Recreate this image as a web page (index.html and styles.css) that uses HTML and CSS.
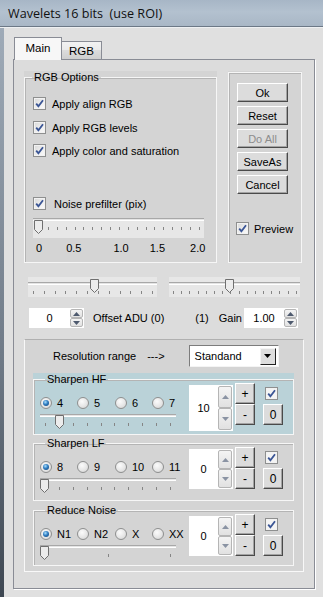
FILE: index.html
```html
<!DOCTYPE html>
<html>
<head>
<meta charset="utf-8">
<title>Wavelets 16 bits (use ROI)</title>
<link rel="stylesheet" href="styles.css">
</head>
<body>
<div class="window">
  <div class="titlebar"><span class="title">Wavelets 16 bits&nbsp; (use ROI)</span></div>
  <div class="client">
    <div class="tabs">
      <div class="tab active">Main</div>
      <div class="tab">RGB</div>
    </div>
    <div class="tabpanel">
      <div class="toprow">
        <div class="group grp-rgb">
          <fieldset class="gframe">
            <legend>RGB Options</legend>
            <div class="cb r1"><span class="check"><svg viewBox="0 0 11 11"><path d="M2.2 5.6l2.2 2.6 4.6-6"/></svg></span>Apply align RGB</div>
            <div class="cb r2"><span class="check"><svg viewBox="0 0 11 11"><path d="M2.2 5.6l2.2 2.6 4.6-6"/></svg></span>Apply RGB levels</div>
            <div class="cb r3"><span class="check"><svg viewBox="0 0 11 11"><path d="M2.2 5.6l2.2 2.6 4.6-6"/></svg></span>Apply color and saturation</div>
            <div class="cb r4"><span class="check"><svg viewBox="0 0 11 11"><path d="M2.2 5.6l2.2 2.6 4.6-6"/></svg></span>Noise prefilter (pix)</div>
            <div class="trackbar tb-pre">
              <div class="channel"></div>
              <svg class="thumb" viewBox="0 0 9 14"><path d="M0.5 0.5H8.5V9.5L4.5 13.5L0.5 9.5Z"/></svg>
              <div class="ticks"><i></i><i></i><i></i><i></i><i></i><i></i><i></i><i></i><i></i><i></i><i></i><i></i><i></i><i></i><i></i><i></i><i></i><i></i><i></i></div>
            </div>
            <div class="scale"><span>0</span><span>0.5</span><span>1.0</span><span>1.5</span><span>2.0</span></div>
          </fieldset>
        </div>
        <div class="group grp-btns">
          <div class="gframe btns">
            <button class="btn">Ok</button>
            <button class="btn">Reset</button>
            <button class="btn" disabled>Do All</button>
            <button class="btn">SaveAs</button>
            <button class="btn">Cancel</button>
            <div class="cb preview"><span class="check"><svg viewBox="0 0 11 11"><path d="M2.2 5.6l2.2 2.6 4.6-6"/></svg></span>Preview</div>
          </div>
        </div>
      </div>

      <div class="sliders">
        <div class="trackbar tb-offset">
          <div class="channel"></div>
          <svg class="thumb" viewBox="0 0 9 14"><path d="M0.5 0.5H8.5V9.5L4.5 13.5L0.5 9.5Z"/></svg>
          <div class="ticks"><i></i><i></i><i></i><i></i><i></i><i></i><i></i><i></i><i></i><i></i><i></i><i></i></div>
        </div>
        <div class="trackbar tb-gain">
          <div class="channel"></div>
          <svg class="thumb" viewBox="0 0 9 14"><path d="M0.5 0.5H8.5V9.5L4.5 13.5L0.5 9.5Z"/></svg>
          <div class="ticks"><i></i><i></i><i></i><i></i><i></i><i></i><i></i><i></i><i></i><i></i><i></i><i></i><i></i><i></i><i></i><i></i></div>
        </div>
      </div>

      <div class="spinrow">
        <div class="edit e-offset">0</div>
        <div class="updown"><span class="ud up"><svg viewBox="0 0 7 4"><path d="M0 4L3.5 0L7 4Z"/></svg></span><span class="ud down"><svg viewBox="0 0 7 4"><path d="M0 0L3.5 4L7 0Z"/></svg></span></div>
        <span class="lbl-offset">Offset ADU (0)</span>
        <span class="lbl-one">(1)</span>
        <span class="lbl-gain">Gain</span>
        <div class="edit e-gain">1.00</div>
        <div class="updown"><span class="ud up"><svg viewBox="0 0 7 4"><path d="M0 4L3.5 0L7 4Z"/></svg></span><span class="ud down"><svg viewBox="0 0 7 4"><path d="M0 0L3.5 4L7 0Z"/></svg></span></div>
      </div>

      <div class="lower">
        <div class="resrow">
          <span class="lbl-res">Resolution range</span>
          <span class="lbl-arrow">---&gt;</span>
          <div class="combo"><span class="combo-text">Standand</span><span class="combo-btn"><svg viewBox="0 0 7 4"><path d="M0 0H7L3.5 4Z"/></svg></span></div>
        </div>

        <div class="group wgroup hf">
          <fieldset class="gframe">
            <legend>Sharpen HF</legend>
            <div class="gbody">
              <div class="gleft">
                <div class="radios">
                  <div class="ri"><span class="radio on"></span>4</div>
                  <div class="ri"><span class="radio"></span>5</div>
                  <div class="ri"><span class="radio"></span>6</div>
                  <div class="ri"><span class="radio"></span>7</div>
                </div>
                <div class="trackbar tb-small tb-hf">
                  <div class="channel"></div>
                  <svg class="thumb" viewBox="0 0 9 14"><path d="M0.5 0.5H8.5V9.5L4.5 13.5L0.5 9.5Z"/></svg>
                  <div class="ticks"><i></i><i></i><i></i><i></i><i></i><i></i><i></i><i></i><i></i><i></i></div>
                </div>
              </div>
              <div class="spinbig tall">
                <div class="edit e-big">10</div>
                <div class="updown big"><span class="ud up"><svg viewBox="0 0 7 4"><path d="M0 4L3.5 0L7 4Z"/></svg></span><span class="ud down"><svg viewBox="0 0 7 4"><path d="M0 0L3.5 4L7 0Z"/></svg></span></div>
              </div>
              <div class="pm"><button class="btn sq">+</button><button class="btn sq">-</button></div>
              <div class="rc"><span class="check white"><svg viewBox="0 0 11 11"><path d="M2.2 5.6l2.2 2.6 4.6-6"/></svg></span><button class="btn sq zero">0</button></div>
            </div>
          </fieldset>
        </div>

        <div class="group wgroup lf">
          <fieldset class="gframe">
            <legend>Sharpen LF</legend>
            <div class="gbody">
              <div class="gleft">
                <div class="radios">
                  <div class="ri"><span class="radio on"></span>8</div>
                  <div class="ri"><span class="radio"></span>9</div>
                  <div class="ri"><span class="radio"></span>10</div>
                  <div class="ri"><span class="radio"></span>11</div>
                </div>
                <div class="trackbar tb-small tb-lf">
                  <div class="channel"></div>
                  <svg class="thumb" viewBox="0 0 9 14"><path d="M0.5 0.5H8.5V9.5L4.5 13.5L0.5 9.5Z"/></svg>
                  <div class="ticks"><i></i><i></i><i></i><i></i><i></i><i></i><i></i><i></i><i></i><i></i></div>
                </div>
              </div>
              <div class="spinbig">
                <div class="edit e-big">0</div>
                <div class="updown big"><span class="ud up"><svg viewBox="0 0 7 4"><path d="M0 4L3.5 0L7 4Z"/></svg></span><span class="ud down"><svg viewBox="0 0 7 4"><path d="M0 0L3.5 4L7 0Z"/></svg></span></div>
              </div>
              <div class="pm"><button class="btn sq">+</button><button class="btn sq">-</button></div>
              <div class="rc"><span class="check white"><svg viewBox="0 0 11 11"><path d="M2.2 5.6l2.2 2.6 4.6-6"/></svg></span><button class="btn sq zero">0</button></div>
            </div>
          </fieldset>
        </div>

        <div class="group wgroup rn">
          <fieldset class="gframe">
            <legend>Reduce Noise</legend>
            <div class="gbody">
              <div class="gleft">
                <div class="radios">
                  <div class="ri"><span class="radio on"></span>N1</div>
                  <div class="ri"><span class="radio"></span>N2</div>
                  <div class="ri"><span class="radio"></span>X</div>
                  <div class="ri"><span class="radio"></span>XX</div>
                </div>
                <div class="trackbar tb-small tb-rn">
                  <div class="channel"></div>
                  <svg class="thumb" viewBox="0 0 9 14"><path d="M0.5 0.5H8.5V9.5L4.5 13.5L0.5 9.5Z"/></svg>
                  <div class="ticks"><i></i><i></i><i></i></div>
                </div>
              </div>
              <div class="spinbig">
                <div class="edit e-big">0</div>
                <div class="updown big"><span class="ud up"><svg viewBox="0 0 7 4"><path d="M0 4L3.5 0L7 4Z"/></svg></span><span class="ud down"><svg viewBox="0 0 7 4"><path d="M0 0L3.5 4L7 0Z"/></svg></span></div>
              </div>
              <div class="pm"><button class="btn sq">+</button><button class="btn sq">-</button></div>
              <div class="rc"><span class="check white"><svg viewBox="0 0 11 11"><path d="M2.2 5.6l2.2 2.6 4.6-6"/></svg></span><button class="btn sq zero">0</button></div>
            </div>
          </fieldset>
        </div>
      </div>
    </div>
  </div>
</div>
</body>
</html>
```

FILE: styles.css
```css
* { box-sizing: border-box; }
html, body { margin: 0; padding: 0; }
body {
  width: 323px;
  height: 597px;
  overflow: hidden;
  font: 11px "Liberation Sans", Arial, sans-serif;
  color: #000;
  background: #e0e0e0;
}

.window {
  width: 323px;
  height: 597px;
  display: flex;
  flex-direction: column;
  background:
    linear-gradient(180deg, #a3afbc 0%, #6f7a87 60%, #3e4752 100%) left top / 4px 100% no-repeat,
    #e0e0e0;
}

.titlebar {
  flex: none;
  height: 27px;
  padding-left: 8px;
  display: flex;
  align-items: center;
  background: linear-gradient(180deg, #a7b6c6 0%, #b3c1cf 45%, #a9b7c6 100%);
  border-bottom: 1px solid #6c7886;
  box-shadow: 0 1px 0 #eef0f2;
}
.title {
  font: 12.6px "Open Sans", "Noto Sans", sans-serif;
  color: #111;
  white-space: pre;
}

.client {
  flex: 1;
  padding: 10px 0 0 13px;
}

/* tabs */
.tabs {
  display: flex;
  align-items: flex-end;
  height: 22px;
  margin-left: 1px;
  position: relative;
  z-index: 1;
}
.tab {
  height: 18px;
  border: 1px solid #898c95;
  border-bottom: none;
  background: linear-gradient(180deg, #f2f2f2 0%, #ebebeb 45%, #dcdcdc 50%, #cfcfcf 100%);
  display: flex;
  align-items: center;
  justify-content: center;
  width: 41px;
  margin-left: -1px;
  padding-top: 1px;
  font-size: 11.5px;
}
.tab.active {
  width: 48px;
  height: 23px;
  margin-left: 0;
  margin-bottom: -1px;
  background: #f7f7f7;
  position: relative;
  z-index: 2;
  padding-top: 0;
  padding-bottom: 2px;
}

.tabpanel {
  width: 302px;
  height: 530px;
  border: 1px solid #898c95;
  background: #dcdcdc;
  box-shadow: 1px 1px 0 #ffffff;
  padding: 11px 0 0 10px;
}

/* group boxes */
.toprow {
  display: flex;
  gap: 11px;
  height: 192px;
}
.group { background: #d4d4d4; }
.grp-rgb { width: 193px; }
.grp-btns { width: 74px; padding-top: 1px; }

fieldset.gframe {
  margin: 0;
  padding: 0 0 0 8px;
  min-width: 0;
  height: 100%;
  border: 1px solid #f6f6f6;
  box-shadow: inset 1px 1px 0 #b4b4b4;
}
.gframe legend {
  padding: 0 2px;
  margin-left: -1px;
  line-height: 13px;
  height: 13px;
}
.btns {
  height: 100%;
  border: 1px solid #f6f6f6;
  box-shadow: inset 1px 1px 0 #b4b4b4;
  display: flex;
  flex-direction: column;
  gap: 4px;
  padding: 10px 0 0 8px;
}

/* checkboxes */
.cb {
  display: flex;
  align-items: center;
  gap: 6px;
  height: 13px;
  white-space: nowrap;
}
.cb.r1 { margin-top: 13px; }
.cb.r2 { margin-top: 11px; }
.cb.r3 { margin-top: 10px; }
.cb.r4 { margin-top: 40px; gap: 8px; }
.cb.preview { margin-top: 24px; margin-left: -1px; gap: 5px; }

.check {
  flex: none;
  width: 13px;
  height: 13px;
  border: 1px solid #8e8f8f;
  background: linear-gradient(135deg, #d8d8d8 0%, #f0f0f0 60%, #fafafa 100%);
  box-shadow: inset 0 0 0 1px #f2f2f2;
  display: flex;
}
.check.white { background: #f4f4f4; }
.check svg { width: 11px; height: 11px; }
.check path {
  fill: none;
  stroke: #3a5595;
  stroke-width: 1.8;
}

/* trackbars */
.trackbar {
  position: relative;
  height: 20px;
  background: #e7e7e7;
}
.trackbar .channel {
  margin-top: 5px;
  height: 3px;
  border-top: 1px solid #a8a8a8;
  border-bottom: 1px solid #ffffff;
  background: #e4e4e4;
}
.trackbar .thumb {
  position: absolute;
  top: 2px;
  width: 9px;
  height: 14px;
}
.thumb path {
  fill: #ececec;
  stroke: #6f6f6f;
  stroke-width: 1;
}
.trackbar .ticks {
  display: flex;
  justify-content: space-between;
  margin-top: 6px;
  height: 3px;
}
.ticks i {
  width: 1px;
  height: 3px;
  background: #858585;
}
.tb-pre { width: 171px; margin-top: 8px; }
.tb-pre .thumb { left: 1px; }
.tb-pre .ticks { margin-left: 6px; margin-right: 4px; }

.scale {
  display: flex;
  height: 13px;
  margin-top: 4px;
  line-height: 13px;
}
.scale span:nth-child(1) { margin-left: 3px; }
.scale span:nth-child(2) { margin-left: 24px; }
.scale span:nth-child(3) { margin-left: 32px; }
.scale span:nth-child(4) { margin-left: 21px; }
.scale span:nth-child(5) { margin-left: 25px; }

.sliders {
  display: flex;
  gap: 12px;
  margin: 14px 0 0 4px;
}
.tb-offset { width: 129px; }
.tb-offset .thumb { left: 62px; }
.tb-offset .ticks { margin-left: 5px; margin-right: 4px; }
.tb-gain { width: 131px; }
.tb-gain .thumb { left: 56px; }
.tb-gain .ticks { margin-left: 4px; margin-right: 3px; }

/* buttons */
.btn {
  width: 51px;
  height: 19px;
  padding: 0;
  font: inherit;
  color: #000;
  background: #dcdcdc;
  border: 1px solid;
  border-color: #ffffff #4a4a4a #4a4a4a #ffffff;
  box-shadow: inset -1px -1px 0 #a3a3a3;
}
.btn:disabled { color: #8d8d8d; }

/* spin row */
.spinrow {
  display: flex;
  align-items: center;
  height: 20px;
  margin-top: 11px;
  padding-right: 16px;
}
.edit {
  background: #ffffff;
  height: 20px;
  display: flex;
  align-items: center;
  justify-content: center;
}
.e-offset { width: 41px; margin-left: 5px; }
.e-gain { width: 40px; margin-left: 2px; }
.updown {
  width: 14px;
  height: 20px;
  display: flex;
  flex-direction: column;
  background: #fff;
  padding: 1px 1px 1px 0;
}
.ud {
  flex: 1;
  border: 1px solid #b5b5b5;
  border-radius: 2px;
  background: linear-gradient(180deg, #f4f4f4, #e1e1e1);
  display: flex;
  align-items: center;
  justify-content: center;
}
.ud svg { width: 7px; height: 4px; }
.ud path { fill: #4e5a6e; }
.updown.big .ud path { fill: #8a93a3; }
.lbl-offset { margin-left: 9px; }
.lbl-one { margin-left: auto; }
.lbl-gain { margin-left: 10px; }

/* lower container */
.lower {
  margin-top: 11px;
  width: 280px;
  height: 233px;
  background: #d4d4d4;
  border: 1px solid;
  border-color: #b0b0b0 #f8f8f8 #f8f8f8 #f8f8f8;
  padding: 5px 0 0 8px;
}
.resrow {
  display: flex;
  align-items: center;
  height: 22px;
}
.lbl-res { margin-left: 20px; }
.lbl-arrow { margin-left: 11px; }
.combo {
  margin-left: 24px;
  width: 90px;
  height: 22px;
  background: #ffffff;
  border: 1px solid;
  border-color: #7c7c7c #f4f4f4 #f4f4f4 #7c7c7c;
  display: flex;
  align-items: center;
  padding: 1px 2px 1px 5px;
}
.combo-text { flex: 1; }
.combo-btn {
  width: 16px;
  height: 17px;
  background: #dedede;
  border: 1px solid;
  border-color: #f4f4f4 #222 #222 #f4f4f4;
  display: flex;
  align-items: center;
  justify-content: center;
}
.combo-btn svg { width: 7px; height: 4px; }
.combo-btn path { fill: #000; }

.wgroup { width: 261px; height: 62px; }
.wgroup fieldset.gframe { padding-left: 6px; }
.wgroup legend { margin-left: 5px; }
.hf { margin-top: 6px; background: #bad2d8; }
.lf { margin-top: 2px; height: 64px; }
.rn { margin-top: 3px; }

.gbody { display: flex; align-items: flex-start; }
.gleft { width: 136px; }
.radios {
  display: grid;
  grid-template-columns: 37px 38px 37px auto;
  margin-top: 10px;
  height: 13px;
}
.ri {
  display: flex;
  align-items: center;
  gap: 5px;
  white-space: nowrap;
}
.radio {
  flex: none;
  width: 12px;
  height: 12px;
  border-radius: 50%;
  border: 1px solid #8e8f8f;
  background: radial-gradient(circle at 40% 35%, #fbfbfb 0%, #e6e6e6 55%, #cfcfcf 100%);
  display: flex;
  align-items: center;
  justify-content: center;
}
.radio.on::after {
  content: "";
  width: 6px;
  height: 6px;
  border-radius: 50%;
  background: radial-gradient(circle at 40% 35%, #a9e0ff 0%, #2f7cc0 45%, #0f3d6e 100%);
}
.tb-small {
  width: 136px;
  height: 18px;
  margin-top: 5px;
  background: transparent;
}
.tb-small .thumb { top: 1px; }
.tb-small .ticks { margin-left: 5px; margin-right: 5px; margin-top: 6px; }
.tb-hf .thumb { left: 15px; }
.tb-lf .thumb, .tb-rn .thumb { left: 0; }

.spinbig {
  display: flex;
  margin: -1px 0 0 13px;
  height: 40px;
}
.e-big { width: 29px; height: 40px; }
.updown.big { width: 15px; height: 40px; }
.spinbig.tall { height: 46px; }
.spinbig.tall .e-big,
.spinbig.tall .updown.big { height: 46px; }
.pm {
  display: flex;
  flex-direction: column;
  margin: -3px 0 0 2px;
}
.btn.sq { width: 20px; height: 21px; font-size: 12px; }
.rc {
  display: flex;
  flex-direction: column;
  margin: 1px 0 0 8px;
}
.rc .check { margin-left: 2px; }
.btn.zero { margin-top: 4px; }
```
